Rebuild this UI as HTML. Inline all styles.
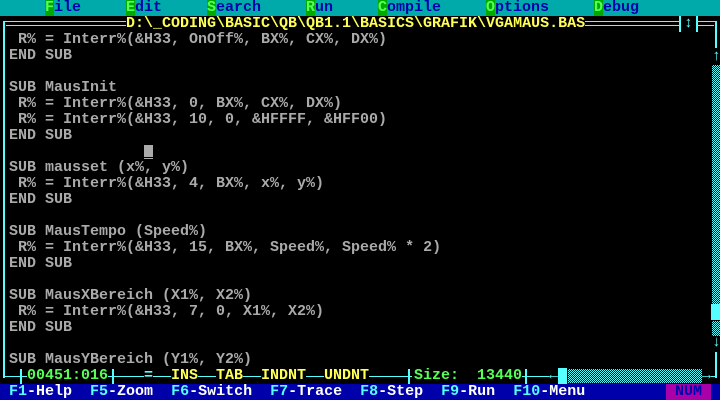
<!DOCTYPE html>
<html><head><meta charset="utf-8"><style>
*{margin:0;padding:0;box-sizing:border-box}
body{width:720px;height:400px;background:#000;position:relative;overflow:hidden;font-family:"Liberation Mono","DejaVu Sans Mono",monospace;font-size:15px;line-height:16px;font-weight:bold}
.a{position:absolute;white-space:pre}
.c{background:#55ffff;position:absolute}
.menu{left:0;top:0;width:720px;height:16px;background:#00aaaa;color:#0000aa}
.hk{background:#00aa00;color:#55ff55}
.t{color:#aaaaaa;left:9px}
.y{color:#ffff55}
.g{color:#55ff55}
.cy{color:#55ffff}
.bar{left:0;top:384px;width:720px;height:16px;background:#0000aa;color:#fff}
.k{color:#55ffff}
.dots{position:absolute;background:repeating-conic-gradient(#55ffff 0 25%,#000 0 50%);background-size:2px 2px}
</style></head><body>
<div class="a menu"></div>
<div class="a" style="left:45px;top:0;color:#0000aa"><span class="hk">F</span>ile</div>
<div class="a" style="left:126px;top:0;color:#0000aa"><span class="hk">E</span>dit</div>
<div class="a" style="left:207px;top:0;color:#0000aa"><span class="hk">S</span>earch</div>
<div class="a" style="left:306px;top:0;color:#0000aa"><span class="hk">R</span>un</div>
<div class="a" style="left:378px;top:0;color:#0000aa"><span class="hk">C</span>ompile</div>
<div class="a" style="left:486px;top:0;color:#0000aa"><span class="hk">O</span>ptions</div>
<div class="a" style="left:594px;top:0;color:#0000aa"><span class="hk">D</span>ebug</div>

<div class="c" style="left:3px;top:21px;width:123px;height:1px"></div>
<div class="c" style="left:6px;top:25px;width:120px;height:1px"></div>
<div class="c" style="left:585px;top:21px;width:94px;height:1px"></div>
<div class="c" style="left:585px;top:25px;width:94px;height:1px"></div>
<div class="c" style="left:679px;top:16px;width:2px;height:16px"></div>
<div class="c" style="left:696px;top:16px;width:2px;height:16px"></div>
<div class="a cy" style="left:684px;top:16px">↕</div>
<div class="c" style="left:698px;top:21px;width:19px;height:1px"></div>
<div class="c" style="left:698px;top:25px;width:16px;height:1px"></div>
<div class="c" style="left:715px;top:22px;width:2px;height:26px"></div>
<div class="a y" style="left:126px;top:16px">D:\_CODING\BASIC\QB\QB1.1\BASICS\GRAFIK\VGAMAUS.BAS</div>

<div class="c" style="left:3px;top:21px;width:2px;height:357px"></div>

<div class="a t" style="top:32px"> R% = Interr%(&amp;H33, OnOff%, BX%, CX%, DX%)
END SUB

SUB MausInit
 R% = Interr%(&amp;H33, 0, BX%, CX%, DX%)
 R% = Interr%(&amp;H33, 10, 0, &amp;HFFFF, &amp;HFF00)
END SUB

SUB mausset (x%, y%)
 R% = Interr%(&amp;H33, 4, BX%, x%, y%)
END SUB

SUB MausTempo (Speed%)
 R% = Interr%(&amp;H33, 15, BX%, Speed%, Speed% * 2)
END SUB

SUB MausXBereich (X1%, X2%)
 R% = Interr%(&amp;H33, 7, 0, X1%, X2%)
END SUB

SUB MausYBereich (Y1%, Y2%)</div>
<div style="position:absolute;left:144px;top:145px;width:9px;height:12px;background:#aaaaaa"></div>
<div style="position:absolute;left:144px;top:158px;width:9px;height:1px;background:#aaaaaa"></div>

<div class="a cy" style="left:712px;top:49px">↑</div>
<div class="dots" style="left:712px;top:65px;width:8px;height:239px"></div>
<div class="c" style="left:711px;top:304px;width:9px;height:16px"></div>
<div class="dots" style="left:712px;top:321px;width:8px;height:15px"></div>
<div class="a cy" style="left:712px;top:335px">↓</div>
<div class="c" style="left:715px;top:352px;width:2px;height:26px"></div>

<div class="c" style="left:4px;top:376px;width:711px;height:1px"></div>
<div class="c" style="left:20px;top:369px;width:2px;height:15px"></div>
<div style="position:absolute;left:27px;top:368px;width:81px;height:16px;background:#000"></div>
<div class="a g" style="left:27px;top:368px">00451:016</div>
<div class="c" style="left:112px;top:369px;width:2px;height:15px"></div>
<div style="position:absolute;left:144px;top:368px;width:9px;height:16px;background:#000"></div>
<div class="a cy" style="left:144px;top:368px">=</div>
<div style="position:absolute;left:171px;top:368px;width:27px;height:16px;background:#000"></div>
<div class="a y" style="left:171px;top:368px">INS</div>
<div style="position:absolute;left:216px;top:368px;width:27px;height:16px;background:#000"></div>
<div class="a y" style="left:216px;top:368px">TAB</div>
<div style="position:absolute;left:261px;top:368px;width:45px;height:16px;background:#000"></div>
<div class="a y" style="left:261px;top:368px">INDNT</div>
<div style="position:absolute;left:324px;top:368px;width:45px;height:16px;background:#000"></div>
<div class="a y" style="left:324px;top:368px">UNDNT</div>
<div class="c" style="left:408px;top:369px;width:2px;height:15px"></div>
<div style="position:absolute;left:412px;top:368px;width:110px;height:16px;background:#000"></div>
<div class="a g" style="left:414px;top:368px">Size:  13440</div>
<div class="c" style="left:525px;top:369px;width:2px;height:15px"></div>
<div style="position:absolute;left:549px;top:368px;width:162px;height:16px;background:#000"></div>
<div class="a cy" style="left:549px;top:368px">←</div>
<div class="c" style="left:558px;top:368px;width:9px;height:16px"></div>
<div class="dots" style="left:568px;top:369px;width:134px;height:14px"></div>
<div class="a cy" style="left:702px;top:368px">→</div>

<div class="a bar"></div>
<div class="a" style="left:9px;top:384px;color:#fff"><span class="k">F1</span>-Help  <span class="k">F5</span>-Zoom  <span class="k">F6</span>-Switch  <span class="k">F7</span>-Trace  <span class="k">F8</span>-Step  <span class="k">F9</span>-Run  <span class="k">F10</span>-Menu</div>
<div style="position:absolute;left:666px;top:384px;width:45px;height:16px;background:#aa00aa"></div>
<div class="a" style="left:675px;top:384px;color:#0000aa">NUM</div>
</body></html>
